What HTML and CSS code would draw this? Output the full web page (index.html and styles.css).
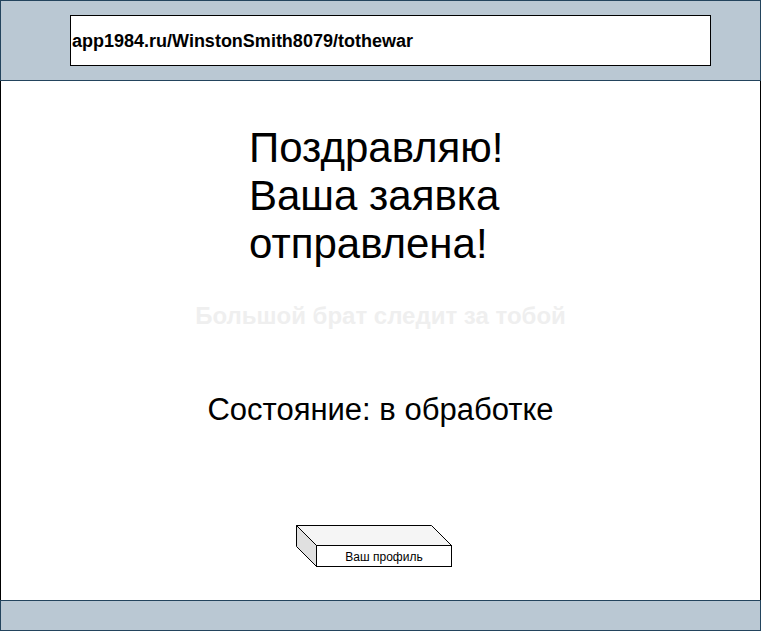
FILE: index.html
```html
<!DOCTYPE html>
<html lang="ru">
<head>
<meta charset="utf-8">
<title>Заявка отправлена</title>
<link rel="stylesheet" href="styles.css">
</head>
<body>
<div class="frame">
  <header class="topbar">
    <div class="address">app1984.ru/WinstonSmith8079/tothewar</div>
  </header>
  <main class="main">
    <h1 class="title">Поздравляю!<br>Ваша заявка<br>отправлена!</h1>
    <p class="motto">Большой брат следит за тобой</p>
    <p class="status">Состояние: в обработке</p>
    <div class="btn-wrap">
      <svg class="btn3d" width="157" height="43" viewBox="0 0 157 43" xmlns="http://www.w3.org/2000/svg">
        <polygon points="0.5,0.5 135.5,0.5 155.5,20.5 20.5,20.5" fill="#f5f5f5" stroke="#000" stroke-width="1"/>
        <polygon points="0.5,0.5 20.5,20.5 20.5,41.5 0.5,21.5" fill="#e0e0e0" stroke="#000" stroke-width="1"/>
        <rect x="20.5" y="20.5" width="135" height="21" fill="#fff" stroke="#000" stroke-width="1"/>
        <text x="88" y="35.5" text-anchor="middle" class="btn-text">Ваш профиль</text>
      </svg>
    </div>
  </main>
  <footer class="bottombar"></footer>
</div>
</body>
</html>
```
FILE: styles.css
```css
html, body {
  margin: 0;
  padding: 0;
  background: #fff;
}
body {
  font-family: "Liberation Sans", Arial, sans-serif;
  color: #000;
}
.frame {
  width: 761px;
  height: 631px;
  display: flex;
  flex-direction: column;
}
.topbar {
  box-sizing: border-box;
  height: 81px;
  background: #bac8d3;
  border: 1px solid #23445d;
  padding: 14px 0 0 69px;
}
.address {
  box-sizing: border-box;
  width: 641px;
  height: 51px;
  background: #fff;
  border: 1px solid #000;
  font-weight: bold;
  font-size: 18px;
  line-height: 20px;
  padding: 15px 0 0 1px;
}
.main {
  flex: 1;
  background: #fff;
  border-left: 1px solid #000;
  border-right: 1px solid #000;
  display: flex;
  flex-direction: column;
}
.title {
  margin: 43px 0 0 248px;
  font-size: 42px;
  font-weight: normal;
  line-height: 48px;
}
.motto {
  margin: 34px 0 0 0;
  text-align: center;
  font-weight: bold;
  font-size: 24px;
  line-height: 28px;
  color: #efefef;
}
.status {
  margin: 62px 0 0 0;
  text-align: center;
  font-size: 31px;
  line-height: 36px;
}
.btn-wrap {
  margin: 97px 0 0 295px;
  height: 43px;
}
.btn3d {
  display: block;
}
.btn-text {
  font-family: "Liberation Sans", Arial, sans-serif;
  font-size: 12px;
  fill: #000;
}
.bottombar {
  box-sizing: border-box;
  height: 31px;
  background: #bac8d3;
  border: 1px solid #23445d;
}
```
